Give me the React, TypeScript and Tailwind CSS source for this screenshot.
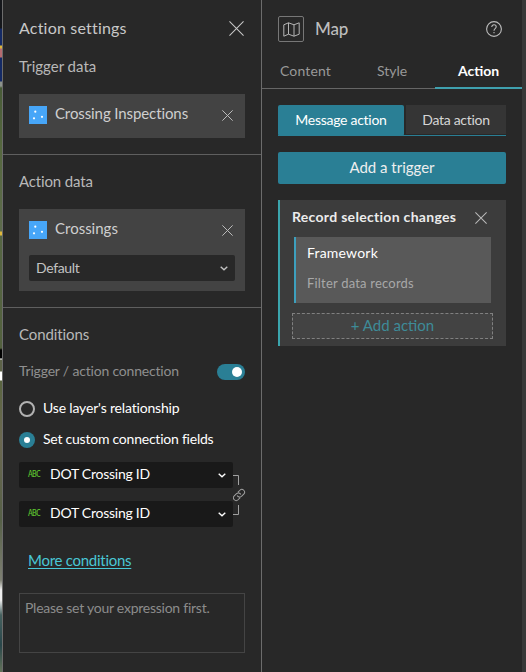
import type { ReactNode } from "react";

function Cross({ size, className = "" }: { size: number; className?: string }) {
  return (
    <svg width={size} height={size} viewBox="0 0 16 16" className={`shrink-0 ${className}`} fill="none" stroke="currentColor" strokeWidth={size > 13 ? 1.1 : 1.4}>
      <path d="M.5.5l15 15M15.5.5l-15 15" />
    </svg>
  );
}

function Chevron({ className = "" }: { className?: string }) {
  return (
    <svg width="8" height="5" viewBox="0 0 8 5" className={`shrink-0 ${className}`} fill="none" stroke="currentColor" strokeWidth="1.4">
      <path d="M.7.8L4 3.8 7.3.8" />
    </svg>
  );
}

function LayerIcon() {
  return (
    <svg width="18" height="18" viewBox="0 0 18 18" className="shrink-0">
      <path fill="#47a6f8" d="M0 0h18v18H0z" />
      <g fill="#fff">
        <circle cx="6.3" cy="5.7" r="1.1" />
        <circle cx="5" cy="12.3" r="1.1" />
        <circle cx="13" cy="10.8" r="1.1" />
      </g>
    </svg>
  );
}

function DataRow({ children }: { children: ReactNode }) {
  return (
    <div className="flex h-[18px] items-center text-[#cfcfcf]">
      <LayerIcon />
      <div className="-mt-1 ml-2 grow text-[15px] leading-[18px]">{children}</div>
      <Cross size={11} className="mr-[2px] text-[#c0c0c0]" />
    </div>
  );
}

function FieldSelect() {
  return (
    <div className="flex h-[26px] w-[214px] items-center rounded-[2px] bg-[#191919] pl-[9px] pr-[7px] text-white">
      <span className="w-[22px] font-['DejaVu_Sans_Mono',monospace] text-[8px] tracking-[-0.8px] text-[#5fc930]">ABC</span>
      <span className="-mt-[3px] grow text-[14px] leading-[18px] tracking-[-0.25px]">DOT Crossing ID</span>
      <Chevron />
    </div>
  );
}

function SettingsPanel() {
  return (
    <section className="flex w-[260px] shrink-0 flex-col border-x border-[#6c6c6c] bg-[#282828]">
      <div className="flex h-[154px] flex-col pl-4 pr-4 pt-[18px]">
        <header className="flex h-5 items-center justify-between pr-[1px] text-[#c8c8c8]">
          <h1 className="text-[16px] font-normal leading-5 tracking-[0.2px]">Action settings</h1>
          <Cross size={15} />
        </header>
        <h2 className="mt-[18px] text-[15px] leading-5 text-[#b8b8b8]">Trigger data</h2>
        <div className="mt-[18px] h-11 bg-[#434343] px-[10px] pt-3">
          <DataRow><span className="tracking-[-0.1px]">Crossing Inspections</span></DataRow>
        </div>
      </div>
      <div className="h-[153px] border-t border-[#5f5f5f] px-4 pt-4">
        <h2 className="text-[15px] leading-5 tracking-[-0.15px] text-[#b8b8b8]">Action data</h2>
        <div className="mt-[18px] h-[82px] bg-[#434343] px-[10px] pt-3">
          <DataRow><span>Crossings</span></DataRow>
          <div className="mt-4 flex h-[26px] items-center justify-between rounded-[2px] bg-[#282828] px-[7px] text-[14px] text-[#c3c3c3]">
            <span className="-mt-px leading-[18px] tracking-[-0.35px]">Default</span>
            <Chevron />
          </div>
        </div>
      </div>
      <div className="grow border-t border-[#5f5f5f] px-4 pt-4">
        <h2 className="text-[15px] leading-5 tracking-[-0.1px] text-[#b8b8b8]">Conditions</h2>
        <div className="mt-[18px] flex h-5 items-center justify-between text-[14px] text-[#8f8f8f]">
          <span className="-mt-[3px] tracking-[-0.19px]">Trigger / action connection</span>
          <span className="flex h-4 w-7 items-center justify-end rounded-full bg-[#2a7f95] pr-[3px]">
            <span className="size-[10px] rounded-full bg-white" />
          </span>
        </div>
        <div className="mt-[19px] flex h-4 items-center gap-2 text-[14px] text-white">
          <span className="size-4 rounded-full border-2 border-[#b2b2b2]" />
          <span className="-mt-[2px] leading-4 tracking-[-0.17px]">Use layer's relationship</span>
        </div>
        <div className="mt-[15px] flex h-4 items-center gap-2 text-[14px] text-white">
          <span className="flex size-4 items-center justify-center rounded-full bg-[#2a7f95]">
            <span className="size-[6px] rounded-full bg-white" />
          </span>
          <span className="-mt-[3px] leading-4 tracking-[-0.23px]">Set custom connection fields</span>
        </div>
        <div className="mt-[14px] flex h-[65px]">
          <div className="flex flex-col justify-between">
            <FieldSelect />
            <FieldSelect />
          </div>
          <svg width="13" height="65" viewBox="0 0 13 65" className="shrink-0" fill="none" stroke="#a0a0a0">
            <path d="M0 13.5h5.5V23M0 52.5h5.5V43" />
            <g transform="translate(6 33) rotate(-45)">
              <path d="M-1 2.7h-3a2.7 2.7 0 0 1 0-5.4h3.2a2.7 2.7 0 0 1 2.4 3.6M1 -2.7h3a2.7 2.7 0 0 1 0 5.4H.8a2.7 2.7 0 0 1-2.4-3.6" />
            </g>
          </svg>
        </div>
        <a className="ml-[9px] mt-[23px] block h-5 text-[15px] leading-5 tracking-[-0.27px] text-[#49c7d5] underline underline-offset-2">More conditions</a>
        <div className="mt-[23px] h-[60px] border border-[#444] px-[5px] pt-[4px] text-[14px] leading-5 tracking-[-0.25px] text-[#8c8c8c]">Please set your expression first.</div>
      </div>
    </section>
  );
}

function WidgetPanel() {
  return (
    <section className="flex w-[260px] shrink-0 flex-col bg-[#282828]">
      <header className="flex h-[58px] items-center pl-4 pr-5 text-[#bdbdbd]">
        <span className="flex size-[26px] items-center justify-center rounded-[2px] border border-[#777]">
          <svg width="17" height="15" viewBox="0 0 17 15" fill="none" stroke="#b4b4b4">
            <path d="M.8 2.8L5.5.8l5.5 2L16.2.8v11.4L11 14.2l-5.5-2-4.7 2zM5.5.8v11.4M11 2.8v11.4" />
          </svg>
        </span>
        <h1 className="ml-[11px] grow text-[17px] font-medium tracking-[-0.2px]">Map</h1>
        <svg width="16" height="16" viewBox="0 0 16 16" fill="none" stroke="currentColor" strokeWidth="1.1">
          <circle cx="8" cy="8" r="7.4" />
          <path d="M5.8 6.1c0-1.5.9-2.3 2.2-2.3s2.2.8 2.2 2c0 1.8-2.2 1.9-2.2 3.9M8 11v1.3" />
        </svg>
      </header>
      <nav className="flex h-[31px] text-center text-[14px] leading-[26px] text-[#999]">
        <span className="w-[87px] border-b border-[#666] tracking-[0.15px]">Content</span>
        <span className="w-[86px] border-b border-[#666]">Style</span>
        <span className="w-[87px] border-b-2 border-[#3fa0ae] font-bold text-white">Action</span>
      </nav>
      <div className="px-4 pt-4">
        <div className="flex h-[31px] gap-[2px] border-b border-[#2a7f95] text-center text-[14px] leading-[29px] tracking-[-0.28px]">
          <span className="-mb-px w-[126px] rounded-[2px] bg-[#2a7f95] text-white">Message action</span>
          <span className="mb-px grow bg-[#353535] text-[#d5d5d5]">Data action</span>
        </div>
        <button className="mt-4 h-8 w-full rounded-[2px] bg-[#2a7f95] pb-px text-[15px] leading-[31px] text-[#eee]">Add a trigger</button>
        <div className="mt-4 h-[146px] border-l-2 border-[#3ba5ad] bg-[#3c3c3c] pl-3 pr-[13px] pt-[7px]">
          <div className="flex h-5 items-center text-[14px] font-bold text-[#ececec]">
            <span className="-mt-px grow tracking-[0.3px]">Record selection changes</span>
            <Cross size={12} className="mr-[6px] mt-[2px] text-[#b8b8b8]" />
          </div>
          <div className="ml-[2px] mr-[2px] mt-[10px] h-[66px] border-l-2 border-[#3d9fbd] bg-[#595959] pl-[11px] pt-[6px] leading-5">
            <div className="text-[14px] tracking-[0.2px] text-white">Framework</div>
            <div className="mt-[10px] text-[13px] tracking-[0.2px] text-[#a8a8a8]">Filter data records</div>
          </div>
          <div className="mt-[10px] h-[26px] border border-dashed border-[#808080] bg-[#434343] text-center text-[15px] leading-[23px] text-[#3e8b98]">+ Add action</div>
        </div>
      </div>
    </section>
  );
}

export default function App() {
  return (
    <main className="flex h-[672px] w-[526px] overflow-hidden bg-[#383838] font-[Lato,sans-serif]">
      <div className="w-[2px] shrink-0 bg-[linear-gradient(to_bottom,#15171b_0_28px,#142a65_29px_45px,#ddb73b_46px_48px,#b66b70_49px_57px,#142a65_58px_81px,#8d938c_82px_86px,#485b37_88px,#56683f_150px,#5d6b4c_231px,#e0b83c_232px_235px,#566643_236px,#53613e_348px,#000_350px_358px,#fff_359px,#5d6348_360px_371px,#fff_372px_380px,#5a6540_381px,#6b6850_440px,#566047_520px,#7e8073_580px,#eee_590px_600px,#46615f_615px,#29464a_645px,#64735a_672px)]" />
      <SettingsPanel />
      <WidgetPanel />
    </main>
  );
}
